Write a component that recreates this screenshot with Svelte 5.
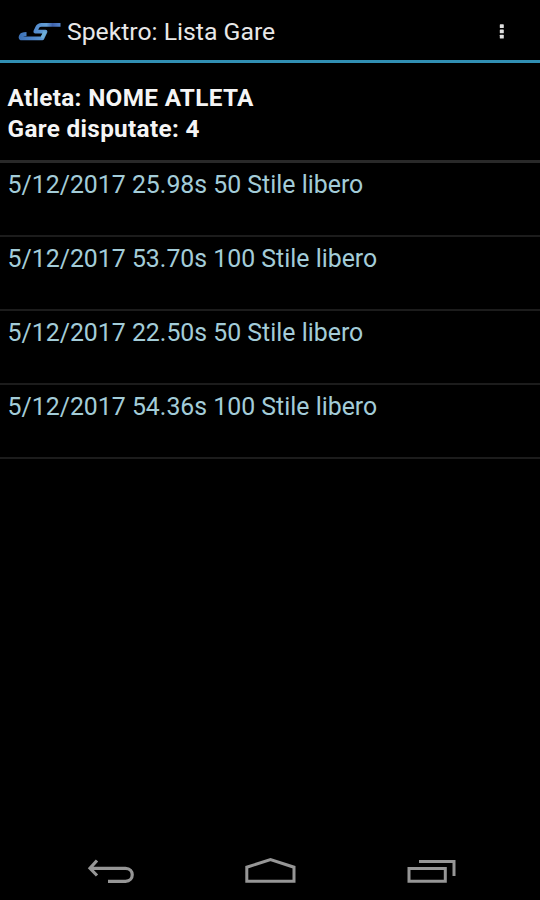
<script>
  const races = [
    { date: '5/12/2017', time: '25.98s', event: '50 Stile libero' },
    { date: '5/12/2017', time: '53.70s', event: '100 Stile libero' },
    { date: '5/12/2017', time: '22.50s', event: '50 Stile libero' },
    { date: '5/12/2017', time: '54.36s', event: '100 Stile libero' }
  ];
</script>

<div class="screen">
  <header>
    <svg class="logo" width="44" height="20" viewBox="0 0 44 20" fill="none" stroke-linejoin="round">
      <defs>
        <linearGradient id="blue" x1="0" y1="0" x2="1" y2="0">
          <stop offset="0" stop-color="#3f74b8" />
          <stop offset="0.3" stop-color="#4f86cc" />
          <stop offset="0.65" stop-color="#649fd4" />
          <stop offset="0.8" stop-color="#3f62ac" />
          <stop offset="1" stop-color="#5586cc" />
        </linearGradient>
      </defs>
      <path d="M42.5 2.8 H23.5 Q20.5 2.8 19.3 5.3 L17.3 9.6 H27.5 L24.3 16.4 H3.2 Q2 15.9 3 13.8 Q4 12 8.5 12" stroke="url(#blue)" stroke-width="3.8" />
      <path d="M27 9.5 24 16" stroke="#6eaed6" stroke-width="3" />
    </svg>
    <h1>Spektro: Lista Gare</h1>
    <svg class="more" width="6" height="18" viewBox="0 0 6 18" fill="#e0e0e0">
      <rect x=".8" y="1.3" width="4" height="3.8" rx=".6" />
      <rect x=".8" y="6.5" width="4" height="3.8" rx=".6" />
      <rect x=".8" y="11.7" width="4" height="3.8" rx=".6" />
    </svg>
  </header>

  <section class="summary">
    <p class="athlete">Atleta: NOME ATLETA</p>
    <p class="count">Gare disputate: 4</p>
  </section>

  <ul>
    {#each races as race}
      <li><span>{race.date} {race.time} {race.event}</span></li>
    {/each}
  </ul>

  <nav>
    <svg width="50" height="30" viewBox="86 856 50 30" fill="none" stroke="#969696" stroke-width="3.2">
      <path d="M97 860.5 90 868.3 97 875.5 M90 868.3 H125.5 C134.5 868.3 134.5 881.3 125.5 881.3 H108" />
    </svg>
    <svg width="56" height="30" viewBox="243 856 56 30" fill="none" stroke="#969696" stroke-width="3">
      <path d="M246.8 881.2 V867.2 L270.5 859.5 294 867.2 V881.2 Z" />
    </svg>
    <svg width="52" height="30" viewBox="406 856 52 30" fill="none" stroke="#969696" stroke-width="3">
      <path d="M409 868.5 H445.3 V881.3 H409 Z M419 861.6 H454 V876" />
    </svg>
  </nav>
</div>

<style>
  :global(body) { background: #000; }
  .screen {
    width: 540px;
    height: 900px;
    display: flex;
    flex-direction: column;
    background: #000;
    font-family: Roboto, sans-serif;
    overflow: hidden;
  }
  header {
    box-sizing: border-box;
    height: 63px;
    display: flex;
    align-items: center;
    padding: 1px 35px 0 18px;
    border-bottom: 3px solid #318fb3;
  }
  .logo { margin: 2px 5px 0 0; }
  .more { margin-top: 2px; }
  h1 {
    flex: 1;
    margin: 3px 0 0;
    font-size: 24.75px;
    line-height: 30px;
    font-weight: 400;
    color: #e8e8e8;
    white-space: nowrap;
  }
  .summary {
    box-sizing: border-box;
    height: 100px;
    padding: 19px 7.5px 0;
    border-bottom: 3px solid #292929;
    color: #f5f5f5;
    font-size: 24.3px;
    letter-spacing: 0.33px;
    line-height: 31px;
    font-weight: 700;
  }
  p { margin: 0; white-space: nowrap; }
  ul { margin: 0; padding: 0; list-style: none; }
  li {
    box-sizing: border-box;
    height: 74px;
    padding: 7px 7.5px 0;
    border-bottom: 2px solid #1c1c1c;
    color: #a3ccd8;
    font-size: 24.85px;
    line-height: 30px;
    white-space: pre;
  }
  nav {
    margin-top: auto;
    display: flex;
    justify-content: space-between;
    padding: 0 82px 14px 86px;
  }
  svg { display: block; flex: none; }
</style>
